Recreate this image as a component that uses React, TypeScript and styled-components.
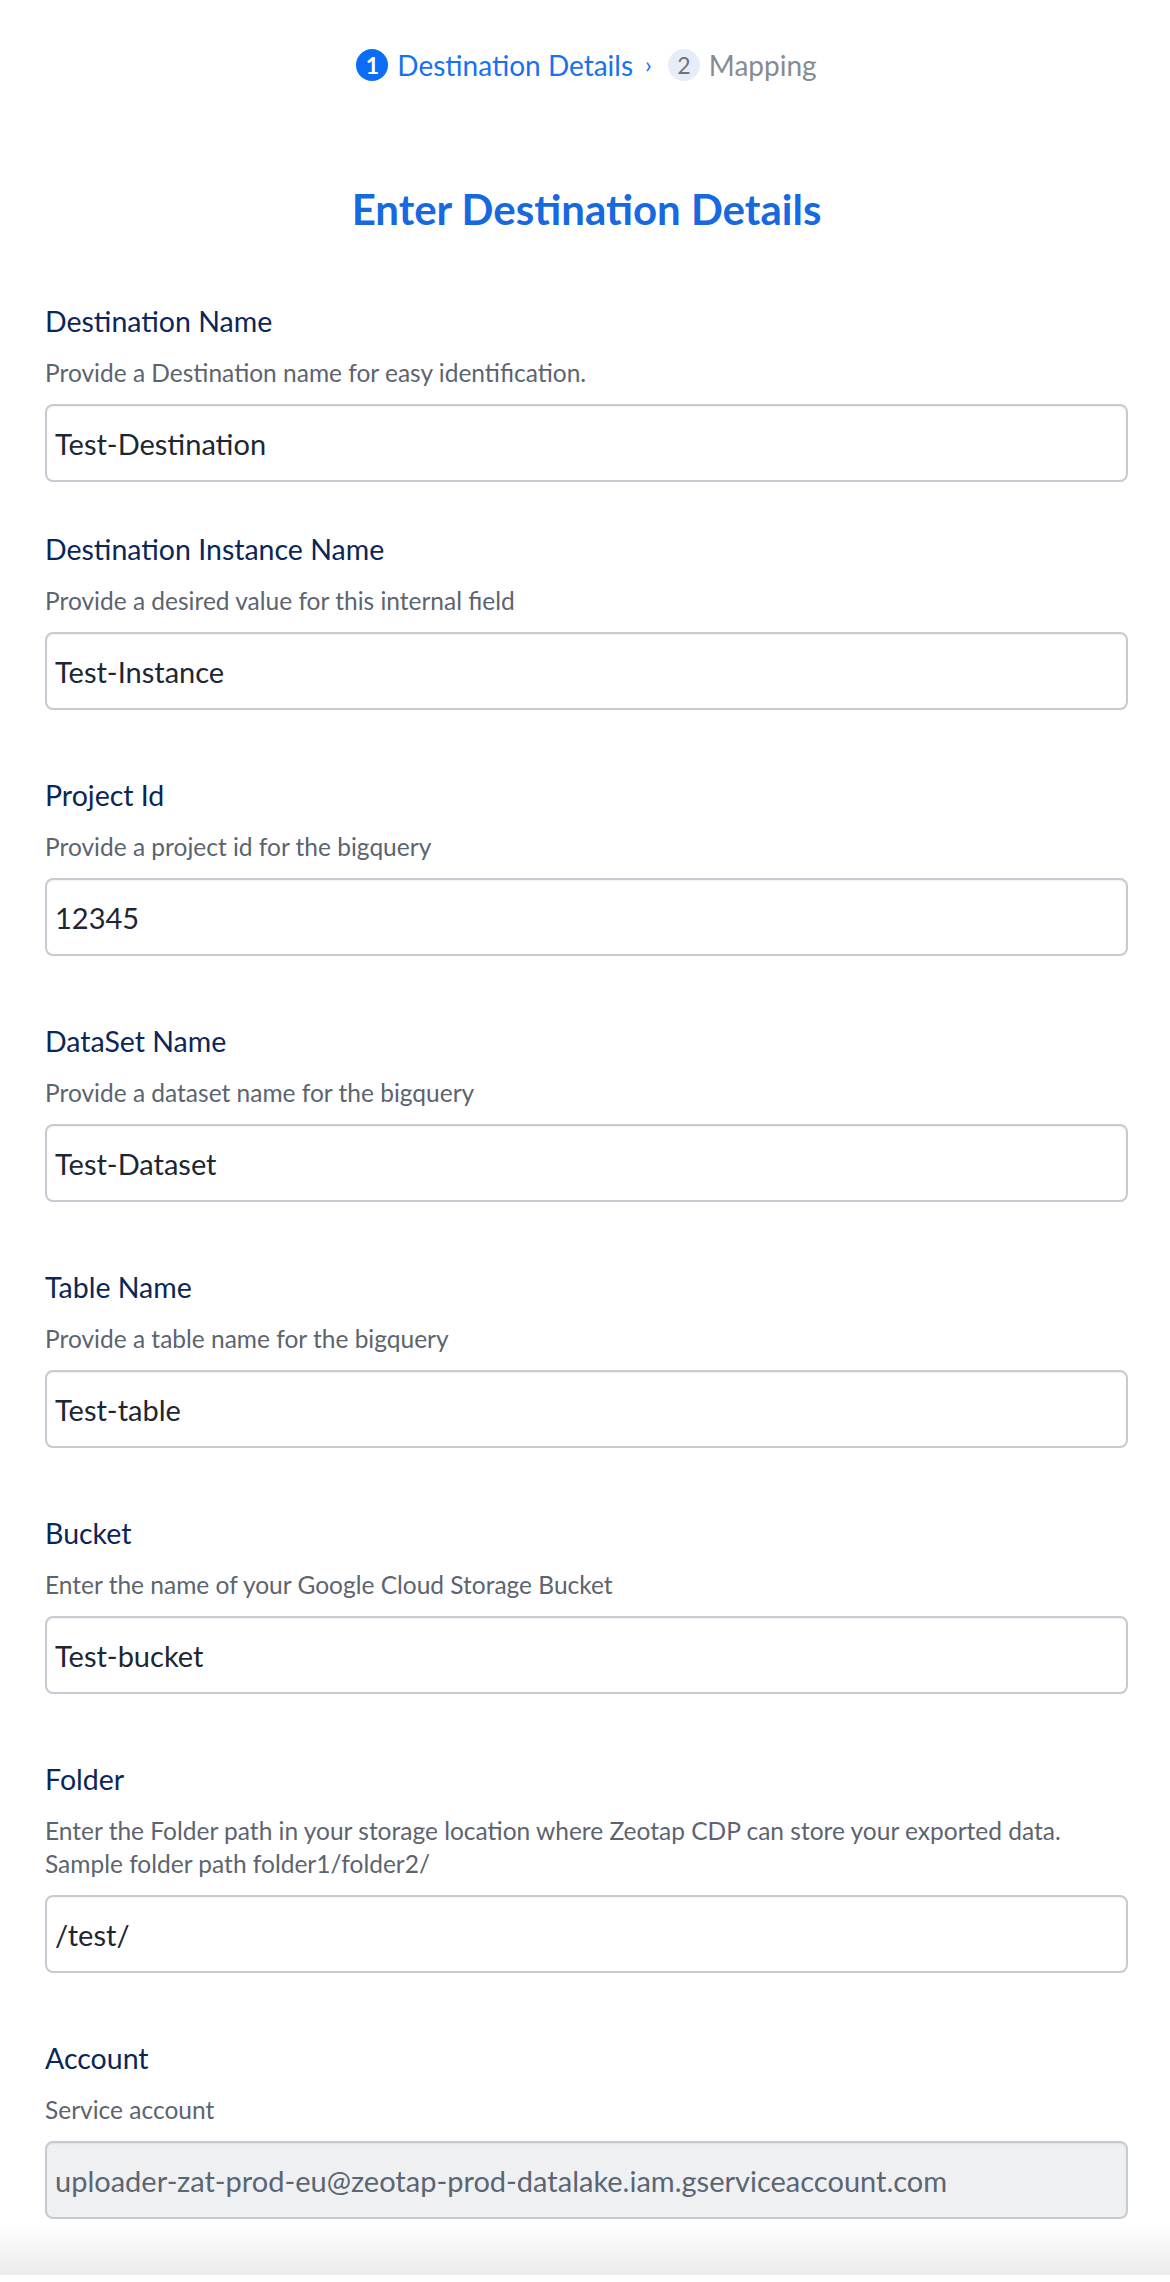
import React from "react";
import { styled, createGlobalStyle } from "styled-components";

const GlobalStyle = createGlobalStyle`
  html, body {
    margin: 0;
    padding: 0;
    background: #ffffff;
    font-family: Lato, "Noto Sans", sans-serif;
  }
  * {
    box-sizing: border-box;
  }
`;

const Page = styled.div`
  width: 1170px;
  min-height: 2282px;
  display: flex;
  flex-direction: column;
  padding: 49px 42px 0 45px;
  background: #ffffff;
`;

const Stepper = styled.div`
  display: flex;
  align-items: center;
  justify-content: center;
  height: 32px;
`;

const StepBadge = styled.span<{ $active?: boolean }>`
  display: inline-flex;
  align-items: center;
  justify-content: center;
  width: 32px;
  height: 32px;
  border-radius: 50%;
  font-size: 23px;
  font-weight: ${(p) => (p.$active ? 700 : 400)};
  background: ${(p) => (p.$active ? "#0b6cf5" : "#e6edf9")};
  color: ${(p) => (p.$active ? "#ffffff" : "#6c737e")};
  margin-right: 9px;
`;

const StepLabel = styled.span<{ $active?: boolean }>`
  font-size: 28px;
  color: ${(p) => (p.$active ? "#1771f1" : "#868b94")};
`;

const Chevron = styled.span`
  font-size: 24px;
  color: #1771f1;
  margin: 0 16px 4px 12px;
`;

const Title = styled.h1`
  margin: 104px 0 0;
  text-align: center;
  font-size: 42px;
  line-height: 48px;
  font-weight: 700;
  color: #1769e0;
`;

const Form = styled.div`
  display: flex;
  flex-direction: column;
  margin-top: 70px;
`;

const Field = styled.div<{ $gap: number }>`
  display: flex;
  flex-direction: column;
  margin-bottom: ${(p) => p.$gap}px;
`;

const Label = styled.div`
  font-size: 28.5px;
  line-height: 36px;
  color: #0b2658;
  margin-bottom: 17px;
`;

const Hint = styled.div`
  font-size: 24.5px;
  line-height: 33px;
  color: #5c6470;
  margin-bottom: 15px;
`;

const TextInput = styled.input<{ $disabled?: boolean }>`
  width: 100%;
  height: 78px;
  padding: 0 8px;
  border: 2px solid #c5cad3;
  border-radius: 8px;
  box-shadow: inset 0 1px 2px rgba(0, 0, 0, 0.06);
  font-family: Lato, "Noto Sans", sans-serif;
  font-size: 29px;
  color: ${(p) => (p.$disabled ? "#5b6573" : "#1d2633")};
  background: ${(p) => (p.$disabled ? "#eff0f2" : "#ffffff")};
  outline: none;
`;

const FooterShade = styled.div`
  margin: 4px -42px 0 -45px;
  height: 52px;
  background: linear-gradient(to bottom, rgba(236, 236, 236, 0), #ebebeb);
`;

interface FieldDef {
  label: string;
  hint: string[];
  value: string;
  disabled?: boolean;
}

const fields: FieldDef[] = [
  { label: "Destination Name", hint: ["Provide a Destination name for easy identification."], value: "Test-Destination" },
  { label: "Destination Instance Name", hint: ["Provide a desired value for this internal field"], value: "Test-Instance" },
  { label: "Project Id", hint: ["Provide a project id for the bigquery"], value: "12345" },
  { label: "DataSet Name", hint: ["Provide a dataset name for the bigquery"], value: "Test-Dataset" },
  { label: "Table Name", hint: ["Provide a table name for the bigquery"], value: "Test-table" },
  { label: "Bucket", hint: ["Enter the name of your Google Cloud Storage Bucket"], value: "Test-bucket" },
  {
    label: "Folder",
    hint: [
      "Enter the Folder path in your storage location where Zeotap CDP can store your exported data.",
      "Sample folder path folder1/folder2/",
    ],
    value: "/test/",
  },
  {
    label: "Account",
    hint: ["Service account"],
    value: "uploader-zat-prod-eu@zeotap-prod-datalake.iam.gserviceaccount.com",
    disabled: true,
  },
];

export default function App() {
  return (
    <Page>
      <GlobalStyle />
      <Stepper>
        <StepBadge $active>1</StepBadge>
        <StepLabel $active>Destination Details</StepLabel>
        <Chevron>›</Chevron>
        <StepBadge>2</StepBadge>
        <StepLabel>Mapping</StepLabel>
      </Stepper>

      <Title>Enter Destination Details</Title>

      <Form>
        {fields.map((f, i) => (
          <Field key={f.label} $gap={i === 0 ? 49 : i === fields.length - 1 ? 0 : 67}>
            <Label>{f.label}</Label>
            <Hint>
              {f.hint.map((line) => (
                <div key={line}>{line}</div>
              ))}
            </Hint>
            <TextInput defaultValue={f.value} readOnly={f.disabled} $disabled={f.disabled} />
          </Field>
        ))}
      </Form>

      <FooterShade />
    </Page>
  );
}
